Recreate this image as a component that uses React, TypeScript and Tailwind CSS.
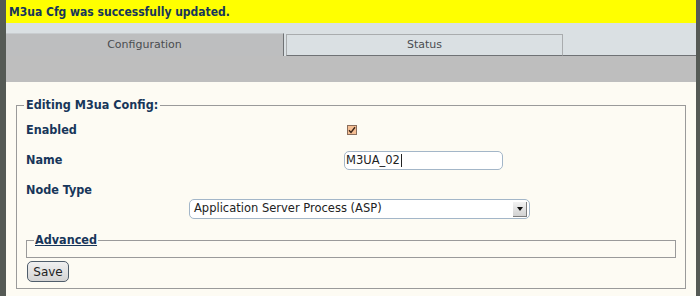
import React from 'react';

const boldFont = "font-['DejaVu_Sans_Condensed','DejaVu_Sans',sans-serif] font-bold text-[#17365a]";
const labelCls = `${boldFont} text-[12.5px]`;

export default function App() {
  return (
    <div className="flex h-[296px] w-[700px] overflow-hidden bg-[#555a55] pl-[6px] pr-[4px] font-['DejaVu_Sans',sans-serif]">
      <div className="flex flex-1 flex-col bg-[#fdfbf3]">
        {/* Status message */}
        <div className={`flex h-[23px] items-center bg-[#ffff00] pl-[3px] text-[12px] ${boldFont}`}>
          M3ua Cfg was successfully updated.
        </div>

        {/* Tabs */}
        <div className="flex h-[33px] items-end bg-[#dae0e3]">
          <div className="flex h-[23px] w-[278px] items-center justify-center border-t border-r border-t-[#c9cdd0] border-r-[#6f7275] bg-[#bdbebf] text-[11px] text-[#4a4d50]">
            Configuration
          </div>
          <div className="ml-[2px] flex h-[22px] w-[277px] items-center justify-center border border-[#a9acae] border-b-[#6f7275] bg-[#dae0e3] text-[11px] text-[#4a4d50]">
            Status
          </div>
          <div className="h-[1px] flex-1 bg-[#6f7275]" />
        </div>
        <div className="h-[26px] bg-[#bebebe]" />

        {/* Form */}
        <fieldset className="mx-[10px] mt-[15px] border border-[#9a9a9a] px-[9px] pb-[6px]">
          <legend className={`ml-[-2px] h-[16px] px-[2px] leading-[16px] ${labelCls}`}>
            Editing M3ua Config:
          </legend>

          <div className="mt-[7px] flex h-[20px] items-center">
            <span className={`w-[321px] ${labelCls}`}>Enabled</span>
            <span className="flex h-[10px] w-[10px] items-center justify-center border border-[#8a6e5c] bg-[#f5bf94]">
              <svg width="8" height="8" viewBox="0 0 8 8">
                <path d="M1 4.2 L3 6.4 L7 1.2" fill="none" stroke="#3a2418" strokeWidth="1.4" />
              </svg>
            </span>
          </div>

          <div className="mt-[11px] flex h-[19px] items-center">
            <span className={`w-[318px] ${labelCls}`}>Name</span>
            <div className="flex h-[19px] w-[159px] items-center rounded-[5px] border border-[#a3b6c8] bg-white pl-[1px] text-[11.5px] text-[#222]">
              M3UA_02
              <span className="ml-[1px] h-[13px] w-[1px] bg-[#222]" />
            </div>
          </div>

          <div className={`mt-[12px] h-[16px] leading-[16px] ${labelCls}`}>Node Type</div>

          <div className="mt-[1px] flex h-[20px] pl-[163px]">
            <div className="flex h-[20px] w-[341px] items-center justify-between rounded-[5px] border border-[#a3b6c8] bg-white pl-[4px] pr-[2px] text-[11.5px] text-[#222]">
              Application Server Process (ASP)
              <span className="flex h-[15px] w-[14px] items-center justify-center border-r border-b border-[#7d7d7d] bg-gradient-to-b from-[#f2f2f2] to-[#d2d2d2]">
                <svg width="6" height="4" viewBox="0 0 6 4">
                  <path d="M0 0 H6 L3 4 Z" fill="#111" />
                </svg>
              </span>
            </div>
          </div>

          <fieldset className="mt-[13px] border border-[#9a9a9a] px-[9px]">
            <legend className={`ml-[-2px] h-[16px] px-[1px] leading-[16px] underline ${labelCls}`}>
              Advanced
            </legend>
            <div className="h-[9px]" />
          </fieldset>

          <button className="mt-[3px] ml-[1px] flex h-[21px] w-[42px] items-center justify-center rounded-[5px] border border-[#4f5d6b] bg-gradient-to-b from-[#f0f0f0] to-[#d4d4d4] text-[12px] text-[#222]">
            Save
          </button>
        </fieldset>
      </div>
    </div>
  );
}
